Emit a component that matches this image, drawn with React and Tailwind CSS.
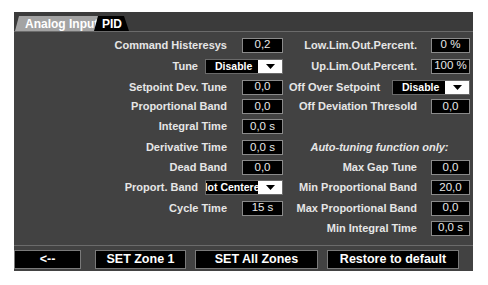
import React from "react";

const FONT = { fontFamily: '"Liberation Sans", Arial, sans-serif' };

function Input({ value, w = "w-[41px]" }) {
  return (
    <div className={`${w} h-[15px] bg-black border border-[#8a8a8a] flex items-center justify-center text-[11.5px] leading-none text-[#e8e8e8] font-normal shrink-0`}>
      {value}
    </div>
  );
}

function Select({ value, shift = false }) {
  return (
    <div className="w-[78px] h-[15px] flex bg-black border border-[#6a6a6a] shrink-0">
      <div className="flex-1 overflow-hidden flex items-center">
        <span className={`whitespace-nowrap text-[10.5px] font-bold leading-none text-white ${shift ? "-ml-[6px]" : "ml-[9px]"}`}>{value}</span>
      </div>
      <div className="w-[24px] h-full bg-white flex items-center justify-center">
        <svg width="9" height="5" viewBox="0 0 9 5"><path d="M0 0H9L4.5 5Z" fill="#000" /></svg>
      </div>
    </div>
  );
}

function Label({ children }) {
  return <span className="whitespace-nowrap text-[11px] font-bold leading-none text-[#e6e6e6]">{children}</span>;
}

const rows = "grid grid-rows-[20px_22px_20px_19px_21px_21px_19px_21px_20px_20px]";

export default function App() {
  return (
    <div className="w-[488px] h-[285px] bg-white overflow-hidden" style={FONT}>
      <div className="ml-[14px] mt-[12px] w-[459px]">
        {/* tab strip */}
        <div className="h-[20px] bg-[#3b3b3b] border-b border-[#6b6b6b] flex items-end pl-[1px]">
          <div className="relative w-[88px] h-[15px] bg-[#a3a3a3] overflow-hidden [clip-path:polygon(4px_0,100%_0,100%_100%,0_100%)] flex items-center">
            <span className="ml-[10px] whitespace-nowrap text-[12px] font-bold leading-none text-white">Analog Input</span>
          </div>
          <div className="relative -ml-[9px] w-[35px] h-[15px] bg-black [clip-path:polygon(4px_0,calc(100%-5px)_0,100%_100%,0_100%)] flex items-center">
            <span className="ml-[8px] whitespace-nowrap text-[12px] font-bold leading-none text-white">PID</span>
          </div>
        </div>

        {/* content */}
        <div className="h-[213px] bg-[#424242] pt-[3px] flex">
          <div className={`w-[269px] ${rows}`}>
            <div className="flex items-center justify-end gap-[15px]"><Label>Command Histeresys</Label><Input value="0,2" /></div>
            <div className="flex items-center justify-end gap-[7px]"><Label>Tune</Label><Select value="Disable" /></div>
            <div className="flex items-center justify-end gap-[15px]"><Label>Setpoint Dev. Tune</Label><Input value="0,0" /></div>
            <div className="flex items-center justify-end gap-[15px]"><Label>Proportional Band</Label><Input value="0,0" /></div>
            <div className="flex items-center justify-end gap-[15px]"><Label>Integral Time</Label><Input value="0,0 s" /></div>
            <div className="flex items-center justify-end gap-[15px]"><Label>Derivative Time</Label><Input value="0,0 s" /></div>
            <div className="flex items-center justify-end gap-[15px]"><Label>Dead Band</Label><Input value="0,0" /></div>
            <div className="flex items-center justify-end gap-[7px]"><Label>Proport. Band</Label><Select value="Not Centered" shift /></div>
            <div className="flex items-center justify-end gap-[15px]"><Label>Cycle Time</Label><Input value="15 s" /></div>
            <div />
          </div>
          <div className={`ml-[6px] w-[181px] ${rows}`}>
            <div className="flex items-center justify-end gap-[14px]"><Label>Low.Lim.Out.Percent.</Label><Input value="0 %" w="w-[39px]" /></div>
            <div className="flex items-center justify-end gap-[14px]"><Label>Up.Lim.Out.Percent.</Label><Input value="100 %" w="w-[39px]" /></div>
            <div className="flex items-center justify-between"><Label>Off Over Setpoint</Label><Select value="Disable" /></div>
            <div className="flex items-center justify-end gap-[14px]"><Label>Off Deviation Thresold</Label><Input value="0,0" w="w-[39px]" /></div>
            <div />
            <div className="flex items-center justify-center">
              <span className="whitespace-nowrap text-[11px] font-bold italic leading-none text-[#e6e6e6]">Auto-tuning function only:</span>
            </div>
            <div className="flex items-center justify-end gap-[14px]"><Label>Max Gap Tune</Label><Input value="0,0" w="w-[39px]" /></div>
            <div className="flex items-center justify-end gap-[14px]"><Label>Min Proportional Band</Label><Input value="20,0" w="w-[39px]" /></div>
            <div className="flex items-center justify-end gap-[14px]"><Label>Max Proportional Band</Label><Input value="0,0" w="w-[39px]" /></div>
            <div className="flex items-center justify-end gap-[14px]"><Label>Min Integral Time</Label><Input value="0,0 s" w="w-[39px]" /></div>
          </div>
        </div>

        {/* button bar */}
        <div className="h-[26px] bg-[#424242] border-t border-[#6b6b6b] pt-[4px] flex items-start">
          <button className="w-[67px] h-[19px] bg-black border border-[#7a7a7a] text-[12.5px] font-bold leading-none text-white">&lt;--</button>
          <button className="ml-[14px] w-[91px] h-[19px] bg-black border border-[#7a7a7a] text-[12.5px] font-bold leading-none text-white">SET Zone 1</button>
          <button className="ml-[9px] w-[123px] h-[19px] bg-black border border-[#7a7a7a] text-[12.5px] font-bold leading-none text-white">SET All Zones</button>
          <button className="ml-[9px] w-[132px] h-[19px] bg-black border border-[#7a7a7a] text-[12.5px] font-bold leading-none text-white">Restore to default</button>
        </div>
      </div>
    </div>
  );
}
